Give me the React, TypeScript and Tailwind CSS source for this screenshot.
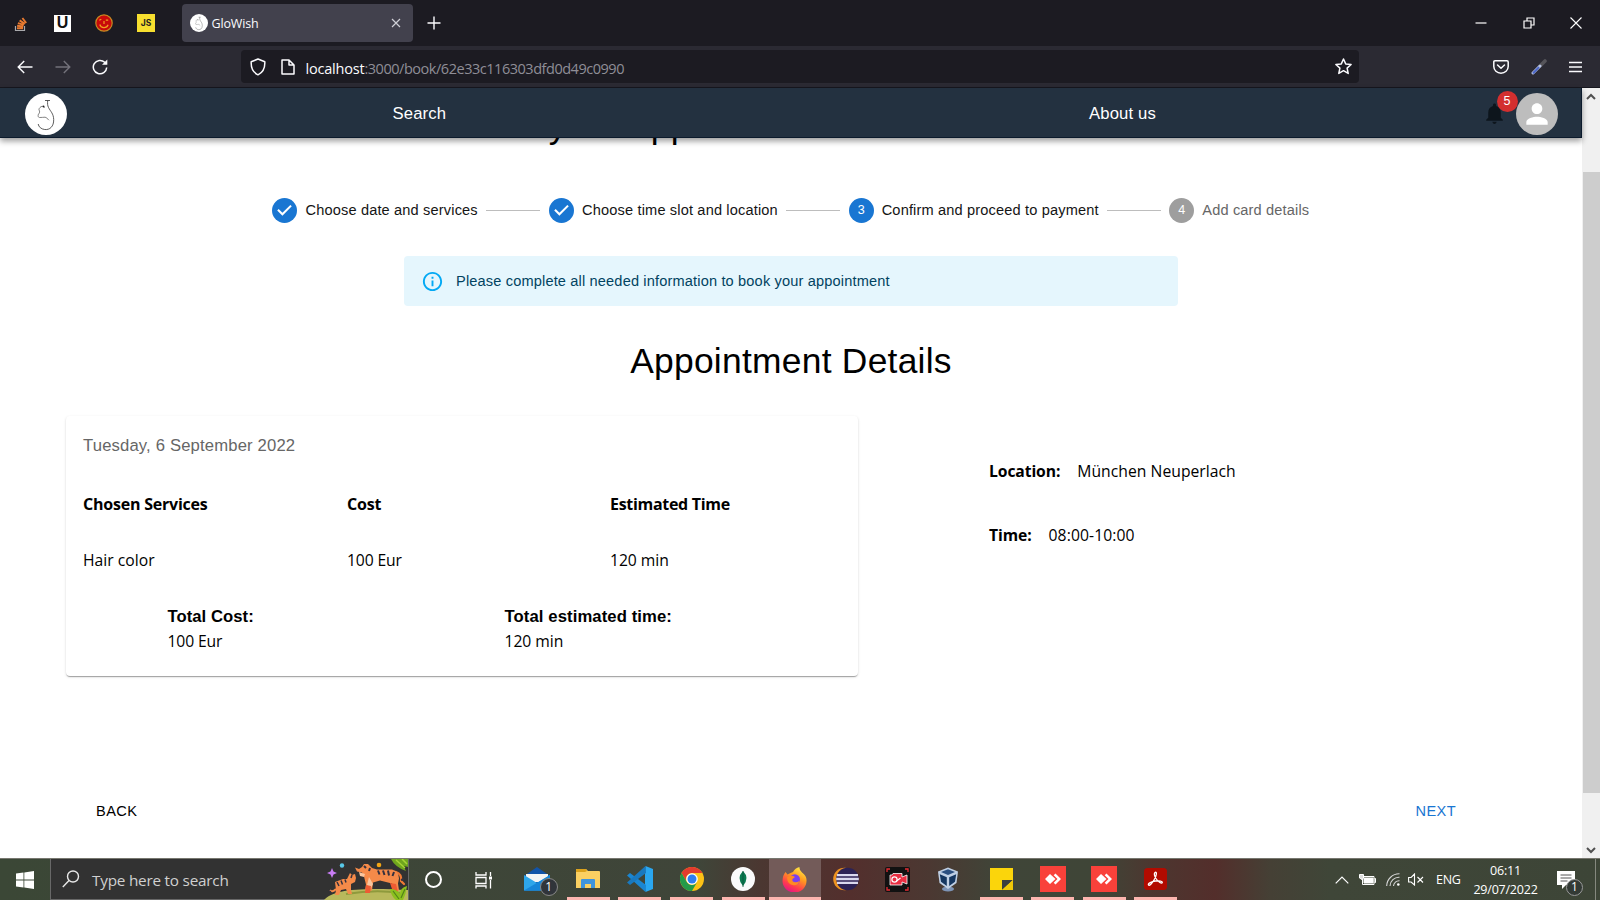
import React from "react";

const Stepper = () => (
  <div className="ml-[272px] flex h-[26px] items-center text-[14.58px] tracking-[0.156px] text-[#151515]">
    <StepDone />
    <span className="ml-[8.5px] w-[172.5px] whitespace-nowrap pt-px">Choose date and services</span>
    <StepLine />
    <StepDone />
    <span className="ml-[8.5px] w-[196px] whitespace-nowrap pt-px">Choose time slot and location</span>
    <StepLine />
    <StepNumber n="3" color="bg-[#1976d2]" />
    <span className="ml-2 w-[217px] whitespace-nowrap pt-px">Confirm and proceed to payment</span>
    <StepLine />
    <StepNumber n="4" color="bg-[#9e9e9e]" />
    <span className="ml-2 whitespace-nowrap pt-px text-[#666]">Add card details</span>
  </div>
);

const StepLine = () => <div className="mx-[8.3px] h-px w-[54px] shrink-0 bg-[#bdbdbd]" />;

const StepDone = () => (
  <svg className="h-[25px] w-[25px] shrink-0" viewBox="0 0 24 24">
    <circle cx="12" cy="12" r="12" fill="#1976d2" />
    <path d="M10 17l-5-5 1.4-1.4 3.6 3.6 7.6-7.6L19 8z" fill="#fff" />
  </svg>
);

const StepNumber = ({ n, color }: { n: string; color: string }) => (
  <div className={"flex h-[25px] w-[25px] shrink-0 items-center justify-center rounded-full text-[12.5px] tracking-normal text-white " + color}>{n}</div>
);

const SwanLogo = ({ className }: { className: string }) => (
  <svg className={className} viewBox="0 0 42 42" fill="none">
    <circle cx="21" cy="21" r="21" fill="#fff" />
    <path d="M20 7.500h5M22.700 7.500c-.3 3-.2 5 .8 7 2 4 5 6 5.200 12 .2 7-4 10.700-9 10-3.500-.4-6-2.500-6.500-5.500" stroke="#333" strokeWidth=".8" />
    <path d="M20 14.500c-1.500-1.500-4-1.500-5 0-1 1-1.500 2-.5 3.500.5 1.500-.5 2.500-1.500 4 .5 1-.5 2 1.500 2.500 2 .3 4-.5 5.500-.3 1.500.3 2.500 1.500 4 3" stroke="#666" strokeWidth=".8" />
    <circle cx="18.500" cy="13.500" r=".9" fill="#222" />
  </svg>
);

const TabStrip = () => (
  <div className="flex h-[46px] items-center bg-[#1c1b22] text-[#fbfbfe]">
    <svg className="ml-[14px] mt-px h-4 w-[14px]" viewBox="0 0 14 16" fill="none">
      <path d="M1.500 10v4.500h9V10" stroke="#a9a9ad" strokeWidth="1.200" />
      <path d="M3 12.300h6M3.100 9.800l6.200.7M3.900 7.100l6 1.800M5.600 4.400l5.200 3.500M8.400 2l3.800 5" stroke="#e87a30" strokeWidth="1.900" />
    </svg>
    <div className="ml-[26px] flex h-[17px] w-[17px] items-center justify-center bg-white font-['Liberation_Sans'] text-[16px] font-black leading-none text-[#111]">U</div>
    <svg className="ml-[24px] h-[18px] w-[18px]" viewBox="0 0 18 18" fill="none">
      <circle cx="9" cy="9" r="8.200" fill="#c80a0a" stroke="#c58a22" strokeWidth="1.200" />
      <path d="M4.300 6.200l2-1M10.800 6.200h2.400M4.800 10.500c1 4 7 4.200 8.300.2M9 7v3" stroke="#f0a020" strokeWidth="1.200" />
    </svg>
    <div className="ml-[24px] flex h-[18px] w-[18px] items-center justify-center bg-[#f7df2f] font-['Inter'] text-[8.500px] font-bold leading-none text-[#222]">JS</div>
    <div className="ml-[26.500px] flex h-[38px] w-[231px] items-center rounded bg-[#42414d] pl-[8px] pr-[10px]">
      <SwanLogo className="h-[18px] w-[18px]" />
      <span className="ml-1 mt-[3px] font-['Open_Sans'] text-[12.500px] tracking-[-0.15px]">GloWish</span>
      <svg className="ml-auto mr-px h-[12px] w-[12px]" viewBox="0 0 12 12" stroke="#cfcfd6" strokeWidth="1.200"><path d="M2 2l8 8M10 2l-8 8" /></svg>
    </div>
    <svg className="ml-[14px] h-[14px] w-[14px]" viewBox="0 0 14 14" stroke="#fbfbfe" strokeWidth="1.400"><path d="M7 .5v13M.5 7h13" /></svg>
    <div className="ml-auto flex items-center gap-[35.500px] pr-[18px] pb-px">
      <svg className="h-3 w-3" viewBox="0 0 12 12" stroke="#fff" strokeWidth="1.200"><path d="M.5 6h11" /></svg>
      <svg className="h-3 w-3" viewBox="0 0 12 12" stroke="#fff" strokeWidth="1.200" fill="none"><path d="M1 4h7v7H1zM4 4V1h7v7H8" /></svg>
      <svg className="h-3 w-3" viewBox="0 0 12 12" stroke="#fff" strokeWidth="1.100"><path d="M.5.5l11 11M11.500.5l-11 11" /></svg>
    </div>
  </div>
);

const NavBar = () => (
  <div className="flex h-[42px] items-center border-b border-[#17171f] bg-[#2b2a33]">
    <svg className="ml-[17px] h-4 w-4" viewBox="0 0 16 16" fill="none" stroke="#fbfbfe" strokeWidth="1.400"><path d="M7.200 2L1.200 8l6 6M1.500 8H15.500" /></svg>
    <svg className="ml-[22px] h-4 w-4" viewBox="0 0 16 16" fill="none" stroke="#73727b" strokeWidth="1.400"><path d="M8.800 2l6 6-6 6M14.500 8H.5" /></svg>
    <svg className="ml-[21px] h-4 w-4" viewBox="0 0 16 16" fill="none" stroke="#fbfbfe" strokeWidth="1.500"><path d="M14.700 8.500a6.700 6.700 0 1 1-2-5.200l1.500 1.500" /><path d="M15.300.5v5.300H10z" fill="#fbfbfe" stroke="none" /></svg>
    <div className="ml-[133px] flex h-[33px] w-[1118px] items-center rounded bg-[#1c1b22] pl-[8.500px] pr-[7px]">
      <svg className="h-[18px] w-[16px]" viewBox="0 0 16 18" fill="none" stroke="#fbfbfe" strokeWidth="1.500" strokeLinejoin="round"><path d="M8 1l6.800 2.800c.3 6-2.300 10.800-6.800 13C3.500 14.600.9 9.800 1.200 3.800z" /></svg>
      <svg className="ml-[15px] h-4 w-[14px]" viewBox="0 0 14 16" fill="none" stroke="#fbfbfe" strokeWidth="1.500" strokeLinejoin="round"><path d="M1 1h7l5 5v9H1zM8 1v5h5" /></svg>
      <div className="ml-[11px] mt-[4px] whitespace-nowrap font-['Open_Sans'] text-[14.500px] tracking-[-0.47px] text-[#8f8e97]"><span className="tracking-[-0.2px] text-[#fbfbfe]">localhost</span>:3000/book/62e33c116303dfd0d49c0990</div>
      <svg className="ml-auto h-[17px] w-[17px]" viewBox="0 0 17 17" fill="none" stroke="#fbfbfe" strokeWidth="1.500" strokeLinejoin="round"><path d="M8.500 1l2.200 4.900 5.400.6-4 3.600 1.100 5.300-4.700-2.700-4.700 2.700 1.100-5.300-4-3.600 5.400-.6z" /></svg>
    </div>
    <div className="ml-auto flex items-center pr-[18.500px]">
      <svg className="h-4 w-4" viewBox="0 0 16 16" fill="none" stroke="#fbfbfe" strokeWidth="1.500" strokeLinecap="round" strokeLinejoin="round"><path d="M2 1.800h12q1.200 0 1.200 1.200v4.500a7.200 6.700 0 0 1-14.400 0V3Q.8 1.800 2 1.800zM4.500 6L8 9.300 11.500 6" /></svg>
      <svg className="ml-[22px] h-4 w-4" viewBox="0 0 16 16" fill="none" strokeLinecap="round"><path d="M9 7l5-5" stroke="#55545a" strokeWidth="3.600" /><path d="M2 14l7-7" stroke="#b9c4e4" strokeWidth="3" /><path d="M2.500 13.800l5-5.200" stroke="#4b66c8" strokeWidth="2" /></svg>
      <svg className="ml-[22px] h-3 w-[13px]" viewBox="0 0 13 12" stroke="#fbfbfe" strokeWidth="1.300"><path d="M0 1.500h13M0 6h13M0 10.500h13" /></svg>
    </div>
  </div>
);

const AppHeader = () => (
  <header className="relative z-10 flex h-[50px] items-center border-b border-r border-[#0b1a2c] bg-[#233140] text-[16.670px] tracking-[0.156px] text-white shadow-[0_3px_6px_rgba(0,0,0,0.4)]">
    <SwanLogo className="ml-[25px] mt-[2px] h-[42px] w-[42px]" />
    <span className="ml-[325.500px] mt-[2px] w-[696.500px]">Search</span>
    <span className="mt-[2px]">About us</span>
    <div className="relative ml-auto mr-[9px] mt-[2px] h-[25px] w-[25px]">
      <svg className="h-[25px] w-[25px]" viewBox="0 0 24 24" fill="#0d151c"><path d="M12 22c1.100 0 2-.9 2-2h-4c0 1.100.9 2 2 2zm6-6v-5c0-3.070-1.630-5.640-4.500-6.320V4c0-.83-.67-1.500-1.500-1.500s-1.500.67-1.500 1.500v.68C7.640 5.360 6 7.920 6 11v5l-2 2v1h16v-1l-2-2z" /></svg>
      <span className="absolute left-[15px] top-[-10px] flex h-[21px] w-[21px] items-center justify-center rounded-full bg-[#d32f2f] text-[12.500px] tracking-normal">5</span>
    </div>
    <div className="mr-[23.500px] mt-[2px] flex h-[42px] w-[42px] items-center justify-center rounded-full bg-[#bdbdbd]">
      <svg className="h-[32px] w-[32px]" viewBox="0 0 24 24" fill="#fff"><path d="M12 12c2.210 0 4-1.790 4-4s-1.790-4-4-4-4 1.790-4 4 1.790 4 4 4zm0 2c-2.670 0-8 1.340-8 4v2h16v-2c0-2.660-5.330-4-8-4z" /></svg>
    </div>
  </header>
);

const Booking = () => (
  <main className="flex h-[720px] flex-col bg-white text-black">
    <div className="-mt-[36px] h-[48px] whitespace-nowrap pl-[457px] text-[35.400px] leading-[48px] tracking-[0.26px]">Book your Appointment</div>
    <div className="mt-[47px]"><Stepper /></div>
    <div className="ml-[404px] mt-[33px] flex h-[50px] w-[774px] items-center rounded bg-[#e5f6fd] pl-[17px] text-[14.580px] tracking-[0.156px] text-[#014361]">
      <svg className="h-[23px] w-[23px]" viewBox="0 0 24 24" fill="#03a9f4"><path d="M11 7h2v2h-2zm0 4h2v6h-2zm1-9C6.480 2 2 6.480 2 12s4.480 10 10 10 10-4.480 10-10S17.520 2 12 2zm0 18c-4.410 0-8-3.590-8-8s3.590-8 8-8 8 3.590 8 8-3.590 8-8 8z" /></svg>
      <span className="ml-[12px] pt-px">Please complete all needed information to book your appointment</span>
    </div>
    <h1 className="mt-[31px] text-center text-[35.400px] leading-[48px] tracking-[0.26px]">Appointment Details</h1>
    <div className="mt-[31px] flex">
      <section className="ml-[66px] h-[260px] w-[791.500px] rounded bg-white px-[17px] pt-[17px] shadow-[0_2px_1px_-1px_rgba(0,0,0,0.2),0_1px_1px_rgba(0,0,0,0.14),0_1px_3px_rgba(0,0,0,0.12)]">
        <div className="text-[16.670px] leading-[25px] tracking-[0.156px] text-[#666]">Tuesday, 6 September 2022</div>
        <div className="mt-[34px] grid grid-cols-[264px_264px_auto] font-['Open_Sans'] text-[16px] font-bold leading-[25px] tracking-[-0.22px]">
          <span>Chosen Services</span><span>Cost</span><span className="-ml-px tracking-[-0.3px]">Estimated Time</span>
        </div>
        <div className="mt-[31px] grid grid-cols-[264px_264px_auto] font-['Open_Sans'] text-[15.700px] leading-[25px] tracking-[-0.05px]">
          <span className="tracking-[0.02px]">Hair color</span><span className="tracking-[-0.15px]">100 Eur</span><span className="-ml-px">120 min</span>
        </div>
        <div className="mt-[31px] grid grid-cols-[337px_auto] pl-[84.500px] leading-[25px]">
          <span className="text-[16.670px] font-bold tracking-[0.05px]">Total Cost:</span>
          <span className="text-[16.670px] font-bold tracking-[0.1px]">Total estimated time:</span>
          <span className="font-['Open_Sans'] text-[15.700px] tracking-[-0.15px]">100 Eur</span>
          <span className="font-['Open_Sans'] text-[15.700px] tracking-[-0.05px]">120 min</span>
        </div>
      </section>
      <section className="ml-[131.500px] pt-[43px] font-['Open_Sans'] text-[15.700px] leading-[25px] tracking-[0.03px]">
        <div className="flex gap-[17px]"><b className="tracking-[-0.1px]">Location:</b><span>München Neuperlach</span></div>
        <div className="mt-[39px] flex gap-[17px]"><b className="tracking-[-0.1px]">Time:</b><span className="tracking-[0.1px]">08:00-10:00</span></div>
      </section>
    </div>
    <div className="mt-[124px] flex h-[24px] items-center justify-between pl-[96px] pr-[126px] text-[14.580px] tracking-[0.417px]">
      <button>BACK</button><button className="text-[#1976d2]">NEXT</button>
    </div>
  </main>
);

const ScrollBar = () => (
  <div className="flex w-[18px] flex-col items-center bg-[#f0f0f0]">
    <svg className="mt-[5px] h-[8px] w-[10px]" viewBox="0 0 10 8" fill="none" stroke="#505050" strokeWidth="2"><path d="M1 6l4-4 4 4" /></svg>
    <div className="mt-[71px] h-[621px] w-[17px] bg-[#cdcdcd]" />
    <svg className="mb-[4px] mt-auto h-[8px] w-[10px]" viewBox="0 0 10 8" fill="none" stroke="#505050" strokeWidth="2"><path d="M1 2l4 4 4-4" /></svg>
  </div>
);

const Tigers = () => (
  <svg className="ml-auto h-[41px] w-[84px]" viewBox="0 0 84 41" fill="none">
    <path d="M0 41C8 31 34 28 84 31v10z" fill="#b9b95c" />
    <path d="M22 35q30-5 54-1" stroke="#8e9a3c" strokeWidth="2" />
    <path d="M8 9l1.500 3.500L13 14l-3.500 1.500L8 19l-1.500-3.500L3 14l3.500-1.500z" fill="#c77df5" />
    <circle cx="18" cy="6.500" r="2.200" fill="#58c8e8" /><circle cx="55" cy="6" r="2.300" fill="#f4a514" />
    <path d="M72 13q6 2 5 9l3 3" stroke="#f07a35" strokeWidth="2.200" strokeLinecap="round" />
    <path d="M35 10l3-2 2-3 4 0 4 4 5 1.500h15q7 2 7 9l-1 5 1 7h-5l-2-7-12-3-7 2-1 8h-7l1-6-2-8-2-4-5-1-2-4z" fill="#f58a49" />
    <path d="M35 13l6 2-1 3-4-1zM45 18l4 7-2 4-4-3z" fill="#f8c6a0" />
    <path d="M66 24l6 1 2 8h-5zM42 26l5 1-1 7h-5z" fill="#ee5b33" />
    <path d="M54 11.500l1.500 4M59 11.500l1.500 4.500M64 11.500l1 5M70 13l-1.500 4M40 7l2 2M46 9l-1 3M77 21l3-1" stroke="#35313f" strokeWidth="2" />
    <path d="M12 30q-4 4-6 1" stroke="#f58a49" strokeWidth="2" />
    <path d="M11 23l8-3h4l2-4 1-2 2 2 3-1 1 4-1 4-4 2v6l1 4h-4l-2-5-5 1-2 5h-4l1-5z" fill="#f58a49" />
    <path d="M13 23l2 4M17 21.500l1.500 4M21 20.500l1 3M28 16l-1 3M5 32l2 1" stroke="#35313f" strokeWidth="1.500" />
    <path d="M67 0q4 8 15 12-2-3-2-5l4 1V0z" fill="#6fa51e" /><path d="M72 1l9 8M78 0l5 5" stroke="#a6d435" strokeWidth="1.500" />
    <path d="M66 30q7 0 10 5 0-6 7-8-1 8-4 14h-7q-5-4-6-11z" fill="#8cc01f" /><path d="M69 32l6 8M81 30l-4 9" stroke="#53821a" strokeWidth="1.200" />
  </svg>
);

const AnyDesk = () => (
  <svg className="h-[26px] w-[26px]" viewBox="0 0 26 26"><path fill="#f9413a" d="M0 0h26v26H0z" /><path d="M5 13l5-5 5.500 5-5.500 5zM13.700 9.200L15.500 7.500 21 13l-5.500 5.500-1.800-1.700L17.500 13z" fill="#fff" /></svg>
);

const Tile = ({ children, line, active }: { children: React.ReactNode; line?: boolean; active?: boolean }) => (
  <div className={"flex h-full w-[51.600px] shrink-0 flex-col items-center " + (active ? "bg-[#735b59]" : "")}>
    <div className="flex flex-1 items-center pt-[2px]">{children}</div>
    <div className={"h-[3px] " + (active ? "w-full " : "w-[43px] ") + (line ? "bg-[#fdb6b0]" : "")} />
  </div>
);

const TaskBar = () => (
  <footer className="flex h-[42px] items-center border-t border-[#77776f] bg-[linear-gradient(90deg,#3b4736_0px,#3f4539_700px,#4b3731_760px,#532f2d_850px,#4b3832_930px,#3f4538_1000px,#3f4537_1100px,#4c3730_1150px,#532e2b_1215px,#454035_1270px,#3f4638_1330px,#3d4537_1600px)] text-white">
    <svg className="ml-4 h-[18px] w-[18px]" viewBox="0 0 18 18" fill="#fff"><path d="M0 2.600l7.500-1V8.600H0zM8.300 1.500L18 0v8.600H8.300zM0 9.400h7.500v7l-7.500-1zM8.300 9.400H18V18l-9.700-1.400z" /></svg>
    <div className="ml-4 flex h-[41px] w-[359px] items-center border border-t-0 border-[#686868] bg-[#323232]">
      <svg className="ml-[11px] h-[18px] w-[18px]" viewBox="0 0 18 18" fill="none" stroke="#e8e8e8" strokeWidth="1.400"><circle cx="11" cy="6.500" r="5.500" /><path d="M7 10.500L.8 17" /></svg>
      <span className="ml-[12px] mt-[2px] whitespace-nowrap font-['Open_Sans'] text-[15.300px] tracking-[-0.22px] text-[#d0d0d0]">Type here to search</span>
      <Tigers />
    </div>
    <div className="flex h-full w-[49px] items-center justify-center"><div className="h-[17px] w-[17px] rounded-full border-[2.500px] border-white" /></div>
    <div className="flex h-full w-[51px] items-center justify-center">
      <svg className="h-[18px] w-[18px]" viewBox="0 0 18 18" fill="none" stroke="#fff" strokeWidth="1.300"><path d="M1 1v3h10V1M1 6.500h10v6H1zM1 17.500V15h10v2.500M15.500 1v4M15.500 9v8.500" /><path d="M14 5.500h3v3h-3z" fill="#fff" stroke="none" /></svg>
    </div>
    <div className="ml-[2px] flex h-full">
      <Tile>
        <div className="relative">
          <svg className="h-[24px] w-[26px]" viewBox="0 0 26 24"><path d="M0 9L13 0l13 9v14.500H0z" fill="#1254a8" /><path d="M2 7h22v8H2z" fill="#f4f4f4" /><path d="M0 8l13 8 13-8v15.500H0z" fill="#2ea6ea" /><path d="M0 23.500L16 14l10-6v15.500z" fill="#1686d8" /></svg>
          <span className="absolute left-[16px] top-[11px] flex h-[18px] w-[18px] items-center justify-center rounded-full border border-[#888] bg-[#30343a] font-['Open_Sans'] text-[12px] leading-none">1</span>
        </div>
      </Tile>
      <Tile line>
        <svg className="h-[22px] w-[24px]" viewBox="0 0 24 22"><path d="M0 2q0-1 1-1h9l2 2h11q1 0 1 1v16H0z" fill="#fbd062" /><path d="M0 2q0-1 1-1h9l1 2-2 1H0z" fill="#dca21b" /><path d="M5 20v-8q0-1 1-1h12q1 0 1 1v8h-4v-4H9v4z" fill="#3f94dc" /></svg>
      </Tile>
      <Tile line>
        <svg className="h-[26px] w-[26px]" viewBox="0 0 26 26"><path d="M18.500 0L26 3v20l-7.500 3L18 20V6z" fill="#2aa7f0" /><path d="M18.500 26L0 9.500 3 7l16 12z" fill="#1a86d2" /><path d="M18.500 0L0 16.500 3 19 19 7z" fill="#1979bf" /></svg>
      </Tile>
      <Tile line>
        <svg className="h-[24px] w-[24px]" viewBox="0 0 24 24"><circle cx="12" cy="12" r="12" fill="#fbc116" /><path d="M1.600 6A12 12 0 0 1 22.400 6H12a6 6 0 0 0-5.200 9z" fill="#e33b2e" /><path d="M1.600 6A12 12 0 0 0 12 24l5.200-9A6 6 0 0 1 6.800 15z" fill="#249a49" /><circle cx="12" cy="12" r="5.800" fill="#fff" /><circle cx="12" cy="12" r="4.500" fill="#2f7df0" /></svg>
      </Tile>
      <Tile line>
        <svg className="h-[24px] w-[24px]" viewBox="0 0 24 24"><circle cx="12" cy="12" r="12" fill="#fafafa" /><path d="M12 4q7 7 0 15-7-8 0-15z" fill="#0b7a50" /><path d="M12 4v16" stroke="#0a5138" strokeWidth=".8" /></svg>
      </Tile>
      <Tile line active>
        <svg className="h-[25px] w-[25px]" viewBox="0 0 25 25">
          <defs><linearGradient id="fx" x1=".8" y1="0" x2=".3" y2="1"><stop offset="0" stopColor="#fff24a" /><stop offset=".4" stopColor="#ff9a1f" /><stop offset=".75" stopColor="#ff3b4e" /><stop offset="1" stopColor="#e31587" /></linearGradient></defs>
          <path d="M3.500 5l2 2.500 3-1.500L11 5q2-4 6.500-5-.5 3 2.500 5.500Q25 9 24.500 14A12 11.500 0 0 1 .5 14Q.5 8.500 3.500 5z" fill="url(#fx)" /><circle cx="12.800" cy="12.500" r="5.200" fill="#7a3ff0" /><path d="M5 10.500q4-3 8-.5l-2.500 2q-1 3 3 3.200 2.500 0 4-1.500-1.500 5-6 4.500-6-.5-6.500-7.700z" fill="#ff8a22" />
        </svg>
      </Tile>
      <Tile>
        <svg className="h-[24px] w-[26px]" viewBox="0 0 26 24"><circle cx="11.500" cy="12" r="11.300" fill="#ee9320" /><circle cx="14.500" cy="12" r="11.300" fill="#2c2255" /><path d="M4 8.200h21M3.200 12h22.600M4 15.800h21" stroke="#d9d8ee" strokeWidth="2.300" /></svg>
      </Tile>
      <Tile>
        <svg className="h-[25px] w-[25px]" viewBox="0 0 25 25" fill="none"><rect width="25" height="25" rx="2" fill="#111" /><path d="M2 5V2h3M20 2h3v3M23 20v3h-3M5 23H2v-3" stroke="#e32c33" strokeWidth="1.300" /><path d="M5 8h2l1-1.500h9V10l5-2v9l-5-2v3H5z" fill="#e92f43" stroke="#fff" strokeWidth=".8" /><circle cx="9.500" cy="12.500" r="2.600" stroke="#fff" strokeWidth="1.200" /><path d="M11.500 14l4-3" stroke="#fff" strokeWidth="1.200" /></svg>
      </Tile>
      <Tile>
        <svg className="mr-[4px] h-[25px] w-[22px]" viewBox="0 0 22 25"><ellipse cx="11" cy="22" rx="6" ry="2.500" fill="#7d94b6" /><path d="M1 4.500L11 .5l10 4L19.500 16 11 22l-8.500-6z" fill="#bfcfe4" /><path d="M4 5L11 2.200 18 5 11 8z" fill="#2b4f80" /><path d="M2.800 7.200l7 3V19L4 14.800zM19.200 7.200l-7 3V19l5.800-4.200z" fill="#153660" /></svg>
      </Tile>
      <Tile line>
        <svg className="h-[22px] w-[23px]" viewBox="0 0 23 22"><path d="M0 0h23v22H0z" fill="#fbd50b" /><path d="M12 22V12h11z" fill="#3b3d40" /><path d="M12 22h11V12z" fill="#f0c808" /></svg>
      </Tile>
      <Tile line><AnyDesk /></Tile>
      <Tile line><AnyDesk /></Tile>
      <Tile line>
        <svg className="h-[22px] w-[23px]" viewBox="0 0 23 22" fill="none"><rect width="23" height="22" rx="3.500" fill="#b30b00" /><path d="M11 4.500c2-1.500 2 3-1 7.500-2 3.500-4.500 6-5.500 5-.8-1.500 3-3.500 7-4 4-.4 7 0 6.800 1.500-.5 1.700-4-.5-6-3.500-1.500-2.300-2.300-5.500-1.300-6.500z" stroke="#fff" strokeWidth="1.300" /></svg>
      </Tile>
    </div>
    <div className="ml-auto flex h-full items-center font-['Open_Sans']">
      <svg className="h-[8px] w-[14px]" viewBox="0 0 14 8" fill="none" stroke="#fff" strokeWidth="1.200"><path d="M.7 7.300L7 1l6.300 6.300" /></svg>
      <svg className="ml-[10px] h-[12px] w-[17px]" viewBox="0 0 17 12" fill="none" stroke="#fff"><path d="M3.500 2.500h11.500v8H3.500z" /><path d="M5 4h9v5H5z" fill="#fff" /><path d="M15.500 4.500h1v4h-1M.5.500h4v3.500l-1.500 1.500L.5 4z" fill="#ddd" /></svg>
      <svg className="ml-[10px] h-[13px] w-[14px]" viewBox="0 0 14 13" fill="none" stroke="#d8d8d8" strokeWidth="1.100"><path d="M.7 13A12.500 12.500 0 0 1 13.500.8M4 13A9 9 0 0 1 13.500 4.200M7.500 13a5.700 5.700 0 0 1 6-5.200" /><circle cx="12.300" cy="11.500" r="1.300" fill="#fff" stroke="none" /></svg>
      <svg className="ml-[8px] h-[13px] w-[16px]" viewBox="0 0 16 13" fill="none" stroke="#fff" strokeWidth="1.100"><path d="M.6 4.500h2.500L6.500 1v11L3.100 9H.6zM9.500 4l5.500 5.500M15 4L9.500 9.500" /></svg>
      <span className="ml-[12px] mt-[2px] w-[24px] text-[12.500px] tracking-[-0.3px]">ENG</span>
      <div className="ml-[13px] w-[65px] text-center text-[12.500px] leading-[19px] tracking-[-0.22px]"><div>06:11</div><div className="whitespace-nowrap">29/07/2022</div></div>
      <div className="relative ml-[19px] mr-[20px]">
        <svg className="h-[18px] w-[18px]" viewBox="0 0 18 18"><path d="M0 0h18v14H9l-4 4v-4H0z" fill="#fff" /><path d="M3.500 4h11M3.500 7h11M3.500 10h7" stroke="#555" /></svg>
        <span className="absolute left-[9px] top-[8px] flex h-[17px] w-[17px] items-center justify-center rounded-full border border-[#999] bg-[#333a35] text-[12px] leading-none">1</span>
      </div>
      <div className="mr-[4px] h-full w-px bg-[#85887e]" />
    </div>
  </footer>
);

export default function App() {
  return (
    <div className="h-[900px] w-[1600px] overflow-hidden font-['Liberation_Sans',Arial,sans-serif]">
      <TabStrip />
      <NavBar />
      <div className="flex h-[770px]">
        <div className="w-[1582px]">
          <AppHeader />
          <Booking />
        </div>
        <ScrollBar />
      </div>
      <TaskBar />
    </div>
  );
}
